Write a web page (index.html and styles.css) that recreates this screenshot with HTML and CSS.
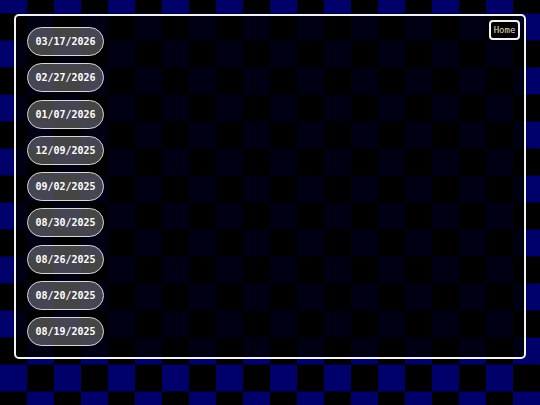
FILE: index.html
```html
<!DOCTYPE html>
<html>
<head>
<meta charset="utf-8">
<link rel="stylesheet" href="styles.css">
</head>
<body>
<div class="panel">
  <a class="home">Home</a>
  <div class="list">
    <button class="date">03/17/2026</button>
    <button class="date">02/27/2026</button>
    <button class="date">01/07/2026</button>
    <button class="date">12/09/2025</button>
    <button class="date">09/02/2025</button>
    <button class="date">08/30/2025</button>
    <button class="date">08/26/2025</button>
    <button class="date">08/20/2025</button>
    <button class="date">08/19/2025</button>
  </div>
</div>
</body>
</html>
```
FILE: styles.css
```css
html {
  height: 100%;
  background-color: #000;
  background-image: conic-gradient(#000 0 25%, #00006a 0 50%, #000 0 75%, #00006a 0);
  background-size: 54px 54px;
  background-position: center;
}
body {
  margin: 0;
  padding: 14px;
  height: 100%;
  box-sizing: border-box;
}
.panel {
  position: relative;
  box-sizing: border-box;
  width: 512px;
  height: 345px;
  border: 2px solid #f2f2f2;
  border-radius: 5px;
  background: rgba(0, 0, 0, 0.8);
  padding: 11px;
}
.list {
  display: flex;
  flex-direction: column;
  align-items: flex-start;
  gap: 7.3px;
}
.date {
  box-sizing: border-box;
  width: 77px;
  height: 29px;
  border: 1.5px solid #d8d8d8;
  border-radius: 14.5px;
  background: rgba(255, 255, 255, 0.27);
  color: #fff;
  font-family: "DejaVu Sans Mono", monospace;
  font-weight: bold;
  font-size: 10px;
  padding: 0;
  text-align: center;
}
.home {
  position: absolute;
  top: 4px;
  right: 4px;
  box-sizing: border-box;
  width: 31px;
  height: 20px;
  border: 2px solid #f2f2f2;
  border-radius: 4px;
  display: flex;
  align-items: center;
  justify-content: center;
  color: #e8dcbc;
  font-family: "DejaVu Sans Mono", monospace;
  font-size: 9px;
}
```
